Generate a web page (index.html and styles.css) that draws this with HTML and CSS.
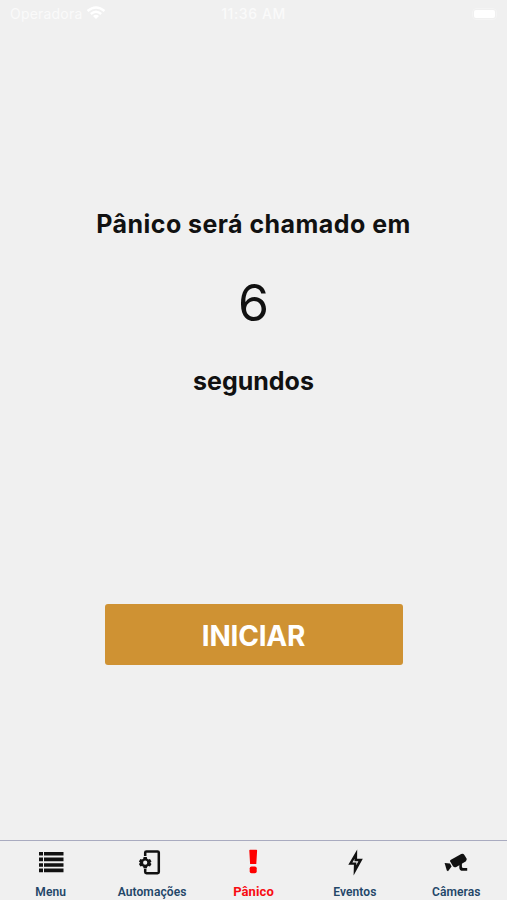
FILE: index.html
```html
<!DOCTYPE html>
<html lang="pt-BR">
<head>
    <meta charset="UTF-8">
    <meta name="viewport" content="width=device-width, initial-scale=1.0">
    <title>Pânico</title>
    <link rel="stylesheet" href="styles.css">
</head>
<body>
    <header class="status-bar">
        <div class="operadora">
            <span>Operadora</span>
            <svg width="20" height="14" viewBox="0 0 20 14" fill="none" stroke="#fff" stroke-width="2.4">
                <path d="M1.5 5Q10-2.2 18.5 5M4.8 8Q10 3.6 15.2 8"/>
                <path d="M7 10Q10 7.5 13 10L10 13z" fill="#fff" stroke="none"/>
            </svg>
        </div>
        <span class="hora">11:36 AM</span>
        <div class="bateria"><span></span></div>
    </header>

    <main class="contagem">
        <h1 class="titulo">Pânico será chamado em</h1>
        <p class="numero">6</p>
        <h2 class="segundos">segundos</h2>
        <button class="iniciar">INICIAR</button>
    </main>

    <nav class="tabs">
        <a class="tab">
            <svg width="28" height="28" viewBox="0 0 28 28">
                <path d="M2 4h4v3.6H2zM7 4h19.5v3.6H7zM2 9.6h4v3.6H2zM7 9.6h19.5v3.6H7zM2 15.2h4v3.6H2zM7 15.2h19.5v3.6H7zM2 20.6h4v3.6H2zM7 20.6h19.5v3.6H7z"/>
            </svg>
            <span>Menu</span>
        </a>
        <a class="tab">
            <svg width="28" height="28" viewBox="0 0 28 28">
                <path d="M7.2 8V4.6Q7.2 3.4 8.4 3.4H19.6Q20.8 3.4 20.8 4.6V24Q20.8 25.2 19.6 25.2H8.4Q7.2 25.2 7.2 24V20.8" fill="none" stroke="#111" stroke-width="2.5"/>
                <path fill-rule="evenodd" d="M5.6 9.1H8.8L9.2 10.8L10.4 11.5L12 11L13.5 13.5L12.2 14.7L13.5 16L12 18.5L10.4 18L9.2 18.7L8.8 20.3H5.6L5.2 18.7L4 18L2.4 18.5L.9 16L2.2 14.7L.9 13.5L2.4 11L4 11.5L5.2 10.8zM7.2 12.6A2.1 2.1 0 1 0 7.2 16.8A2.1 2.1 0 1 0 7.2 12.6z"/>
            </svg>
            <span>Automações</span>
        </a>
        <a class="tab ativo">
            <svg width="28" height="28" viewBox="0 0 28 28">
                <path d="M11 1.8H17.4Q18.2 1.8 18.1 2.8L17.3 16H11.1L10.3 2.8Q10.2 1.8 11 1.8z"/>
                <rect x="10.7" y="18.4" width="7" height="6.8" rx="1.8"/>
            </svg>
            <span>Pânico</span>
        </a>
        <a class="tab">
            <svg width="28" height="28" viewBox="0 0 28 28">
                <path fill-rule="evenodd" d="M16.2 1.5L7.3 16.8H12.9L12.6 27.4L21.8 10.8H16.1zM13.6 10.8L13.4 13.2H17.4L15.2 17.2L15.4 14.6H11.4z"/>
            </svg>
            <span>Eventos</span>
        </a>
        <a class="tab">
            <svg width="28" height="28" viewBox="0 0 28 28">
                <path d="M8.5 12L19.2 6.1Q21.2 5.2 22.4 7L24.8 11L24 13.2L14.3 19Q12.2 20 11 18.2L8.2 13.4Q7.9 12.5 8.5 12z"/>
                <path d="M2.6 15L8 15.6L9.6 18.6L6 23.2L4.8 22.6z"/>
                <path d="M17.3 15L19.9 13.8V18.4Q19.9 20 21.5 20H25.2V22.8H20.8Q17.3 22.8 17.3 19.4z"/>
            </svg>
            <span>Câmeras</span>
        </a>
    </nav>
</body>
</html>
```

FILE: styles.css
```css
body{
    margin: 0;
    height: 900px;
    display: flex;
    flex-direction: column;
    overflow: hidden;
    background-color: #f0f0f0;
    color: #111;
    font-family: Inter, sans-serif;
}

.status-bar{
    display: grid;
    grid-template-columns: 1fr auto 1fr;
    align-items: center;
    height: 27px;
    padding: 0 10px;
    color: #fafafa;
    font-size: 14px;
}
.operadora{
    display: flex;
    align-items: center;
    gap: 4px;
    letter-spacing: 0.2px;
}
.operadora svg{
    margin-bottom: 2px;
}
.hora{
    font-weight: 500;
    letter-spacing: 0.6px;
}
.bateria{
    justify-self: end;
    padding: 1px;
    border: 1px solid #f4f4f4;
    border-radius: 4px;
}
.bateria span{
    display: block;
    width: 21px;
    height: 8px;
    border-radius: 2px;
    background-color: white;
}

.contagem{
    flex: 1;
    display: flex;
    flex-direction: column;
    align-items: center;
    padding-top: 179px;
}
.titulo, .segundos{
    margin: 0;
    font-size: 25px;
    font-weight: 700;
    line-height: 36px;
    white-space: nowrap;
}
.titulo{
    letter-spacing: 0.45px;
}
.numero{
    margin: 31px 0 30px;
    font-size: 50px;
    font-weight: 400;
    line-height: 60px;
}
.iniciar{
    width: 298px;
    height: 61px;
    margin-top: 205px;
    padding: 2px 0 0;
    border: none;
    border-radius: 3px;
    background-color: #cf9233;
    color: white;
    font-family: Inter, sans-serif;
    font-size: 28px;
    font-weight: 700;
    letter-spacing: -0.2px;
}

.tabs{
    display: grid;
    grid-template-columns: repeat(5, 1fr);
    height: 59px;
    border-top: 1px solid #a9abc0;
}
.tab{
    display: flex;
    flex-direction: column;
    align-items: center;
    padding-top: 7px;
    color: #234668;
    font-family: Roboto, sans-serif;
    font-size: 12px;
    font-weight: 600;
    letter-spacing: 0.1px;
    line-height: 16px;
}
.tab svg{
    fill: #111;
    margin-bottom: 8px;
}
.ativo{
    color: #f80b12;
    font-size: 13px;
    font-weight: 700;
}
.ativo svg{
    fill: #fe0000;
}
```
